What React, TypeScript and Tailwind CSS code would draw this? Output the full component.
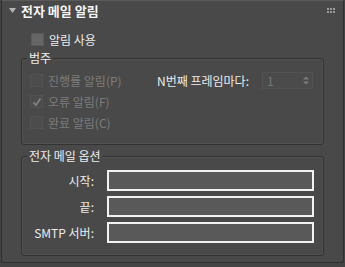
import React from "react";

const font = { fontFamily: '"Noto Sans CJK KR", "Noto Sans", sans-serif' };

function Check({ checked, disabled, label }: { checked?: boolean; disabled?: boolean; label: React.ReactNode }) {
  return (
    <div className="flex items-center h-[21px]">
      <div
        className={
          "w-[13px] h-[13px] flex items-center justify-center border " +
          (disabled ? "border-[#525252] bg-[#4c4c4c]" : "border-[#5a5a5a] bg-[#666666]")
        }
      >
        {checked && (
          <svg width="10" height="10" viewBox="0 0 10 10">
            <path d="M1.5 5.5 L4 8 L8.5 1.5" stroke="#7e7e7e" strokeWidth="2" fill="none" />
          </svg>
        )}
      </div>
      <span className={"ml-[5px] text-[12px] leading-none " + (disabled ? "text-[#7c7c7c]" : "text-[#ececec]")}>
        {label}
      </span>
    </div>
  );
}

function Group({ title, className, children }: { title: string; className?: string; children: React.ReactNode }) {
  return (
    <div className={"relative border border-[#333] rounded-[3px] shadow-[inset_0_0_0_1px_#505050] " + (className || "")}>
      <span className="absolute left-[5px] top-[-9px] px-[2px] bg-[#494949] text-[12px] leading-[16px] text-[#eeeeee]">
        {title}
      </span>
      {children}
    </div>
  );
}

function Field({ label }: { label: string }) {
  return (
    <div className="flex items-center h-[21px]">
      <span className="w-[72px] text-right text-[12px] text-[#ececec] leading-none">{label}</span>
      <div className="ml-[13px] w-[207px] h-[21px] border-2 border-[#f2f2f2] bg-[#595959]" />
    </div>
  );
}

export default function App() {
  return (
    <div className="w-[345px] h-[267px] bg-[#444444] overflow-hidden" style={font}>
      <div className="w-[343px] h-[263px] ml-[1px] border border-[#2f2f2f] border-t-[#5a5a5a] rounded-b-[3px] bg-[#494949]">
        <div className="flex items-center h-[18px] pl-[7px] pr-[8px]">
          <svg width="7" height="5" viewBox="0 0 7 5">
            <path d="M0 0 H7 L3.5 5 Z" fill="#b5b5b5" />
          </svg>
          <span className="ml-[5px] text-[13px] font-bold text-[#f4f4f4] leading-none">전자 메일 알림</span>
          <div className="ml-auto grid grid-cols-3 gap-[1px]">
            {Array.from({ length: 6 }).map((_, i) => (
              <div key={i} className="w-[2px] h-[2px] bg-[#9a9a9a]" />
            ))}
          </div>
        </div>
        <div className="pl-[29px] mt-[10px]">
          <Check label="알림 사용" />
        </div>
        <div className="px-[19px] mt-[8px]">
          <Group title="범주" className="h-[87px]">
            <div className="flex pt-[11px] pl-[8px]">
              <div className="flex flex-col w-[127px]">
                <Check disabled label="진행률 알림(P)" />
                <Check disabled checked label="오류 알림(F)" />
                <Check disabled label="완료 알림(C)" />
              </div>
              <div className="flex items-center h-[21px]">
                <span className="w-[105px] text-[12px] text-[#ececec] leading-none">N번째 프레임마다:</span>
                <div className="w-[51px] h-[17px] border border-[#525252] bg-[#4b4b4b] flex items-center justify-between pl-[4px] pr-[3px]">
                  <span className="text-[12px] text-[#777] leading-none">1</span>
                  <svg width="6" height="9" viewBox="0 0 6 9">
                    <path d="M0 3.5 L3 0.5 L6 3.5 Z M0 5.5 L3 8.5 L6 5.5 Z" fill="#7c7c7c" />
                  </svg>
                </div>
              </div>
            </div>
          </Group>
          <Group title="전자 메일 옵션" className="mt-[11px] h-[100px]">
            <div className="flex flex-col pt-[13px] gap-[5px]">
              <Field label="시작:" />
              <Field label="끝:" />
              <Field label="SMTP 서버:" />
            </div>
          </Group>
        </div>
      </div>
    </div>
  );
}
